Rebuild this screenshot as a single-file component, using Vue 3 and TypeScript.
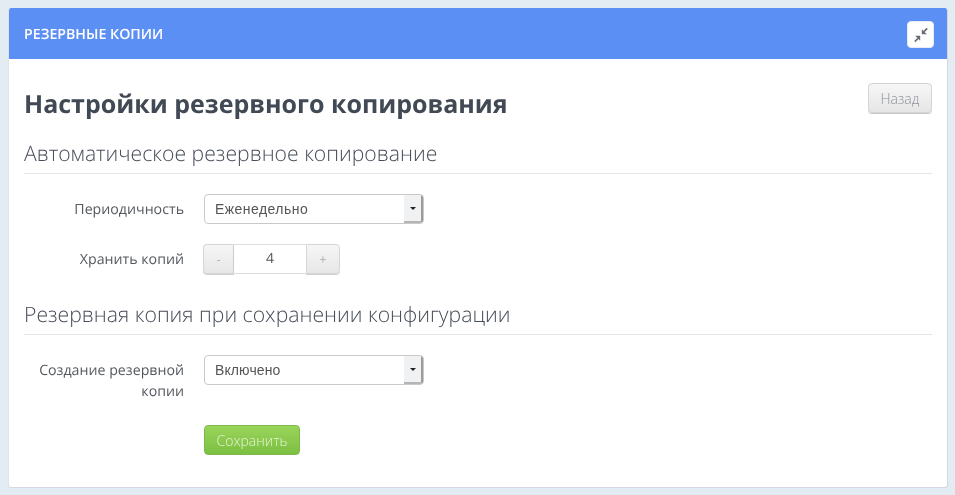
<script setup lang="ts">
const title = 'Настройки резервного копирования'
</script>

<template>
  <div class="page">
    <div class="panel">
      <div class="head">
        <span class="head-title">РЕЗЕРВНЫЕ КОПИИ</span>
        <button class="collapse" type="button" aria-label="Свернуть">
          <svg width="16" height="16" viewBox="0 0 16 16">
            <path d="M14.2 1.4 L11 4.6" fill="none" stroke="#666c75" stroke-width="1.6" />
            <path d="M8.8 2.2 V7.2 H13.8 Z" fill="#666c75" />
            <path d="M1.8 14.6 L5 11.4" fill="none" stroke="#666c75" stroke-width="1.6" />
            <path d="M7.2 13.8 V8.8 H2.2 Z" fill="#666c75" />
          </svg>
        </button>
      </div>
      <div class="body">
        <div class="title-row">
          <h1>{{ title }}</h1>
          <button class="btn back" type="button">Назад</button>
        </div>
        <h2>Автоматическое резервное копирование</h2>
        <div class="row first">
          <label>Периодичность</label>
          <div class="select">
            <span class="val spaced">Еженедельно</span>
            <span class="arrow"><i></i></span>
          </div>
        </div>
        <div class="row second">
          <label>Хранить копий</label>
          <div class="spinner">
            <span class="sp minus">-</span>
            <span class="num">4</span>
            <span class="sp plus">+</span>
          </div>
        </div>
        <h2 class="h2b">Резервная копия при сохранении конфигурации</h2>
        <div class="row third">
          <label>Создание резервной<br />копии</label>
          <div class="select">
            <span class="val tight">Включено</span>
            <span class="arrow"><i></i></span>
          </div>
        </div>
        <div class="row actions">
          <button class="save" type="button">Сохранить</button>
        </div>
      </div>
    </div>
  </div>
</template>

<style>
html, body { margin: 0; background: #e2ecf2; }
</style>

<style scoped>
.page {
  box-sizing: border-box;
  height: 495px;
  padding: 8px 7px 7px 8px;
  background: #e2ecf2;
  font-family: "Open Sans", sans-serif;
  overflow: hidden;
  text-rendering: geometricPrecision;
}
.panel {
  height: 480px;
  box-sizing: border-box;
  background: #fff;
  border-radius: 3px;
  border: 1px solid #d3d8e0;
  border-top: 0;
  border-left: 1px solid #dfe3ea;
  overflow: hidden;
  will-change: transform;
}
.head {
  box-sizing: border-box;
  height: 51px;
  margin: 0 -1px 0 0;
  background: #5c8ff3;
  display: flex;
  align-items: center;
  justify-content: space-between;
  padding: 2px 14px 0 15px;
}
.head-title { color: #fff; font-size: 14.2px; font-weight: 600; line-height: 20px; }
.collapse {
  width: 27px;
  height: 27px;
  padding: 0;
  border: 1px solid #e6ebf5;
  border-radius: 4px;
  background: #fff;
  display: flex;
  align-items: center;
  justify-content: center;
}
.body { padding: 24px 15px 0 15px; }
.title-row { display: flex; justify-content: space-between; align-items: flex-start; height: 47px; }
h1 {
  margin: 5px 0 0;
  font-size: 25px;
  line-height: 32px;
  font-weight: 700;
  color: #404954;
}
.btn.back {
  width: 64px;
  height: 30px;
  border: 1px solid #d4d4d4;
  border-radius: 4px;
  background: linear-gradient(#f6f6f6, #e6e6e6);
  box-shadow: 0 1px 0 #c8c8c8;
  color: #8d929a;
  font: 300 14px "Open Sans", sans-serif;
  padding: 0;
}
h2 {
  margin: 0;
  height: 44px;
  box-sizing: border-box;
  padding-top: 10px;
  line-height: 28px;
  font-size: 21.2px;
  font-weight: 300;
  color: #474e59;
  border-bottom: 1px solid #e3e5e8;
}
.h2b { height: 50px; padding-top: 16px; }
.row { display: flex; }
.row label {
  width: 160px;
  margin-right: 20px;
  text-align: right;
  font-size: 14.2px;
  line-height: 21px;
  color: #55595f;
  padding-top: 5px;
}
.first { margin-top: 20px; height: 50px; }
.second { height: 41px; }
.third { margin-top: 20px; height: 70px; }
.actions { padding-left: 180px; }
.select {
  box-sizing: border-box;
  width: 220px;
  height: 30px;
  border: 1px solid #c9c9c9;
  border-radius: 4px;
  display: flex;
  justify-content: space-between;
  overflow: hidden;
  background: #fff;
}
.val {
  font: 14px/28px "Liberation Sans", sans-serif;
  color: #555;
  padding-left: 10px;
  text-rendering: auto;
}
.val.spaced { letter-spacing: 0.45px; }
.val.tight { letter-spacing: 0.1px; }
.arrow {
  width: 19px;
  background: #f0f1f3;
  border-right: 2px solid #9b9b9b;
  border-bottom: 2px solid #b5b5b5;
  display: flex;
  align-items: center;
  justify-content: center;
  box-sizing: border-box;
}
.arrow i {
  width: 0;
  height: 0;
  border-left: 3.5px solid transparent;
  border-right: 3.5px solid transparent;
  border-top: 3.5px solid #222;
}
.spinner {
  display: flex;
  height: 30px;
  width: 137px;
  margin-left: -1px;
  box-sizing: border-box;
}
.sp {
  box-sizing: border-box;
  border: 1px solid #d6d6d6;
  background: linear-gradient(#f5f5f5, #e7e7e7);
  box-shadow: 0 1px 0 #cfcfcf;
  color: #8d929a;
  font: 300 13px/28px "Open Sans", sans-serif;
  text-align: center;
}
.minus { width: 31px; border-radius: 4px 0 0 4px; border-right-color: #cccccc; }
.plus { width: 34px; border-radius: 0 4px 4px 0; }
.num {
  box-sizing: border-box;
  width: 72px;
  border-top: 1px solid #ddd;
  border-bottom: 1px solid #ddd;
  text-align: center;
  font: 14px/28px "Open Sans", sans-serif;
  color: #555;
}
.save {
  width: 96px;
  height: 30px;
  padding: 0;
  border: 1px solid #7cb94d;
  border-radius: 4px;
  background: linear-gradient(#9ad45a, #7cc043);
  color: #e4f4d2;
  font: 300 14px "Open Sans", sans-serif;
}
</style>
